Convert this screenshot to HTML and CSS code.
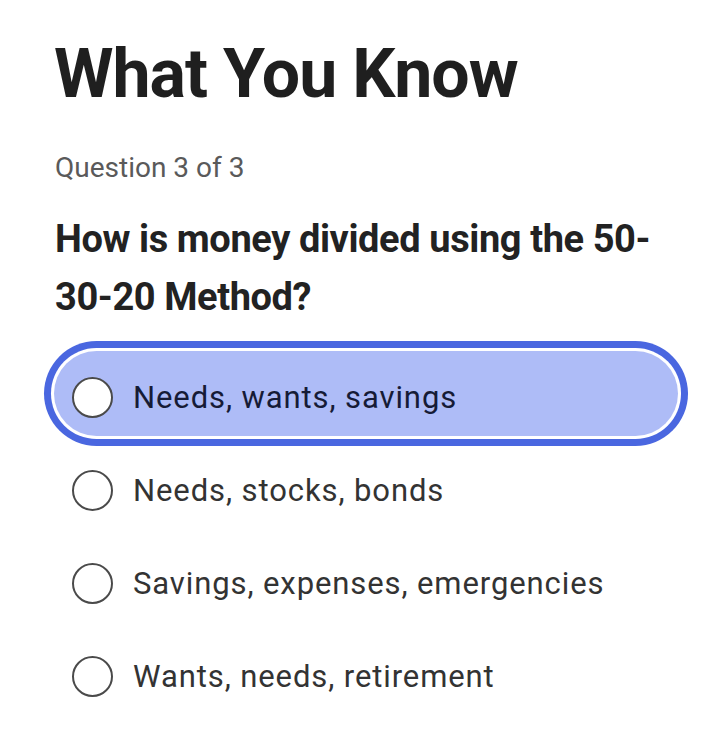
FILE: index.html
```html
<!DOCTYPE html>
<html lang="en">
<head>
    <meta charset="UTF-8">
    <meta name="viewport" content="width=device-width, initial-scale=1.0">
    <title>What You Know - Quiz</title>
    <link rel="stylesheet" href="styles.css">
</head>
<body>
    <div class="quiz">
        <h1>What You Know</h1>
        <div class="progress">Question 3 of 3</div>
        <h2 class="question">How is money divided using the 50-30-20 Method?</h2>

        <div class="options">
            <label class="option selected">
                <span class="radio"></span>
                <span class="option-text">Needs, wants, savings</span>
            </label>
            <label class="option">
                <span class="radio"></span>
                <span class="option-text">Needs, stocks, bonds</span>
            </label>
            <label class="option">
                <span class="radio"></span>
                <span class="option-text">Savings, expenses, emergencies</span>
            </label>
            <label class="option">
                <span class="radio"></span>
                <span class="option-text">Wants, needs, retirement</span>
            </label>
        </div>
    </div>
</body>
</html>
```

FILE: styles.css
```css
body {
    margin: 0;
    padding: 34px 0 0 0;
    font-family: Roboto, "Liberation Sans", Arial, sans-serif;
    background-color: #fff;
    color: #222;
}
.quiz {
    padding-left: 54px;
    width: 624px;
}
h1 {
    margin: 0;
    font-size: 68px;
    line-height: 80px;
    font-weight: 700;
    color: #1f1f1f;
    letter-spacing: -1px;
}
.progress {
    margin: 37px 0 0 1px;
    font-size: 28px;
    line-height: 34px;
    color: #5a5a5a;
}
.question {
    margin: 25px 0 0 1px;
    font-size: 38px;
    line-height: 58px;
    font-weight: 700;
    color: #222;
    width: 610px;
    letter-spacing: -0.4px;
}
.options {
    margin-top: 25px;
    display: flex;
    flex-direction: column;
    gap: 8px;
}
.option {
    display: flex;
    align-items: center;
    height: 85px;
    box-sizing: border-box;
    padding: 7px 0 0 18px;
    border-radius: 43px;
    cursor: pointer;
}
.option.selected {
    background-color: #aebcf7;
    box-shadow: 0 0 0 3px #fff, 0 0 0 10px #4a67e0;
}
.radio {
    width: 37px;
    height: 37px;
    border: 2px solid #4a4a4a;
    border-radius: 50%;
    background-color: #fff;
    flex-shrink: 0;
}
.option-text {
    margin-left: 20px;
    font-size: 31px;
    color: #333;
    letter-spacing: 0.9px;
}
.option.selected .option-text {
    color: #161b36;
}
```
